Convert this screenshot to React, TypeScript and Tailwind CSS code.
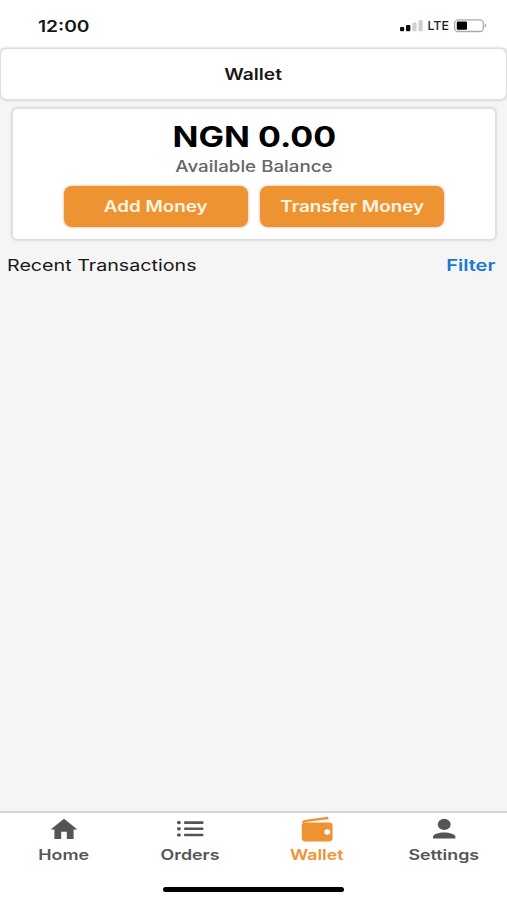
import React from "react";
import clsx from "clsx";

interface LabelProps {
  children: React.ReactNode;
  className?: string;
}

// Wide-set text, the spans keep their centre unless an origin is given
const Label = ({ children, className }: LabelProps) => (
  <span className={clsx("inline-block whitespace-nowrap", className)}>
    {children}
  </span>
);

const HomeIcon = () => (
  <svg viewBox="0 0 28 22" className="w-7 h-[22px] ml-[2px]" fill="currentColor">
    <path d="M14 .8 27.4 11.4H23.6V21H16.8V13.8H11.2V21H4.4V11.4H.6Z" />
  </svg>
);

const OrdersIcon = () => (
  <svg viewBox="0 0 28 22" className="w-7 h-[22px]" fill="currentColor">
    <rect x="1" y="3" width="3.8" height="3.2" rx="1.4" />
    <rect x="1" y="9.2" width="3.8" height="3.2" rx="1.4" />
    <rect x="1" y="15.4" width="3.8" height="3.2" rx="1.4" />
    <rect x="8" y="3.3" width="19.5" height="2.6" rx="1" />
    <rect x="8" y="9.5" width="19.5" height="2.6" rx="1" />
    <rect x="8" y="15.7" width="19.5" height="2.6" rx="1" />
  </svg>
);

const WalletIcon = () => (
  <svg viewBox="0 0 32 26" className="w-8 h-[26px]" fill="currentColor">
    <path d="M1 6.8C1 5.2 2.2 4.2 4.6 3.8L25 .9C26.7 .7 27.6 1.4 27.6 2.5V3.3L5 6 3 7Z" />
    <path
      fillRule="evenodd"
      d="M3.8 6.6H28.6C30.6 6.6 31.6 7.6 31.6 9V22.6C31.6 24.4 30.4 25.4 28.6 25.4H3.8C2 25.4 .8 24.4 .8 22.6V9C.8 7.6 2 6.6 3.8 6.6ZM23.2 16A3 2.7 0 1 0 29.2 16A3 2.7 0 1 0 23.2 16Z"
    />
  </svg>
);

const PersonIcon = () => (
  <svg viewBox="0 0 28 22" className="w-7 h-[22px]" fill="currentColor">
    <ellipse cx="14.2" cy="6.4" rx="6.4" ry="5.6" />
    <path d="M3 20.4V18.8C3 16 8.6 14.4 14.2 14.4S25.4 16 25.4 18.8V20.4Z" />
  </svg>
);

const tabs = [
  { name: "Home", icon: <HomeIcon />, active: false },
  { name: "Orders", icon: <OrdersIcon />, active: false },
  { name: "Wallet", icon: <WalletIcon />, active: true },
  { name: "Settings", icon: <PersonIcon />, active: false },
];

const StatusBar = () => (
  <div className="h-[48px] flex items-start justify-between bg-white pl-[38px] pr-[19px] pt-[14px]">
    <Label className="text-[16px] leading-6 font-semibold origin-left scale-x-[1.2]">
      12:00
    </Label>
    <svg viewBox="0 0 88 16" className="w-[88px] h-4 mt-[4px]">
      <rect x="0" y="9" width="4.2" height="4.3" rx="1" fill="#111" />
      <rect x="6" y="7" width="4.4" height="6.3" rx="1" fill="#111" />
      <rect x="12.4" y="4.5" width="4.2" height="8.8" rx="1" fill="#cfcfcf" />
      <rect x="18.5" y="2" width="4.2" height="11.3" rx="1" fill="#cfcfcf" />
      <text
        x="27.5"
        y="12.3"
        fontSize="12"
        fontWeight="500"
        fill="#222"
        textLength="21.5"
        lengthAdjust="spacingAndGlyphs"
      >
        LTE
      </text>
      <rect x="54.6" y="1.9" width="28.8" height="11.6" rx="3.5" fill="white" stroke="#aaa" strokeWidth="1.3" />
      <rect x="56.8" y="3.6" width="10.2" height="8.2" rx="1.2" fill="black" />
      <path d="M84.8 5.2Q88 7.6 84.8 10Z" fill="#aaa" />
    </svg>
  </div>
);

const BalanceCard = () => (
  <div className="ml-[12px] mr-[11px] mt-[8px] h-[132px] rounded-[5px] bg-white border border-[#dedede] shadow-[0_0_3px_rgba(0,0,0,0.22)] flex flex-col items-center">
    <Label className="mt-[12px] text-[28px] leading-8 font-bold text-black scale-x-[1.215]">
      NGN 0.00
    </Label>
    <Label className="mt-[2px] text-[15.5px] leading-6 font-medium text-[#666] scale-x-[1.21]">
      Available Balance
    </Label>
    <div className="mt-[7px] flex gap-[12px] text-[#fff5e2] text-[15.5px] font-semibold">
      <button className="w-[184px] h-[41px] rounded-[8px] bg-[#ed9332] shadow-[0_0_3px_rgba(160,90,20,0.5)]">
        <Label className="scale-x-[1.215]">Add Money</Label>
      </button>
      <button className="w-[184px] h-[41px] rounded-[8px] bg-[#ed9332] shadow-[0_0_3px_rgba(160,90,20,0.5)]">
        <Label className="scale-x-[1.215]">Transfer Money</Label>
      </button>
    </div>
  </div>
);

const TabBar = () => (
  <nav className="h-[89px] bg-white border-t-2 border-[#d4d4d4] flex flex-col items-center">
    <div className="w-full h-[74px] grid grid-cols-4">
      {tabs.map((tab) => (
        <div
          key={tab.name}
          className={clsx(
            "flex flex-col items-center",
            tab.active ? "text-[#ed9332]" : "text-[#555]"
          )}
        >
          <div className="h-[32px] flex items-center justify-center">
            {tab.icon}
          </div>
          <Label className="text-[14.5px] leading-5 font-semibold scale-x-[1.23]">
            {tab.name}
          </Label>
        </div>
      ))}
    </div>
    <div className="w-[181px] h-[5px] rounded-full bg-black" />
  </nav>
);

const App = () => {
  return (
    <div className="w-[507px] h-[900px] overflow-hidden flex flex-col bg-[#f5f5f5] text-[#171717] font-['Inter','Liberation_Sans',sans-serif]">
      <div className="bg-white">
        <StatusBar />
      </div>
      <header className="h-[52px] rounded-[7px] bg-white border border-[#dedede] shadow-[0_0_3px_rgba(0,0,0,0.25)] flex items-center justify-center">
        <Label className="text-[16px] font-semibold scale-x-[1.2]">
          Wallet
        </Label>
      </header>
      <main className="flex-1">
        <BalanceCard />
        <div className="mt-[13px] pl-[7px] pr-[12px] flex justify-between text-[16px] leading-6">
          <Label className="origin-left scale-x-[1.23]">
            Recent Transactions
          </Label>
          <Label className="origin-right scale-x-[1.25] font-semibold text-[#1b78d0]">
            Filter
          </Label>
        </div>
      </main>
      <TabBar />
    </div>
  );
};

export default App;
